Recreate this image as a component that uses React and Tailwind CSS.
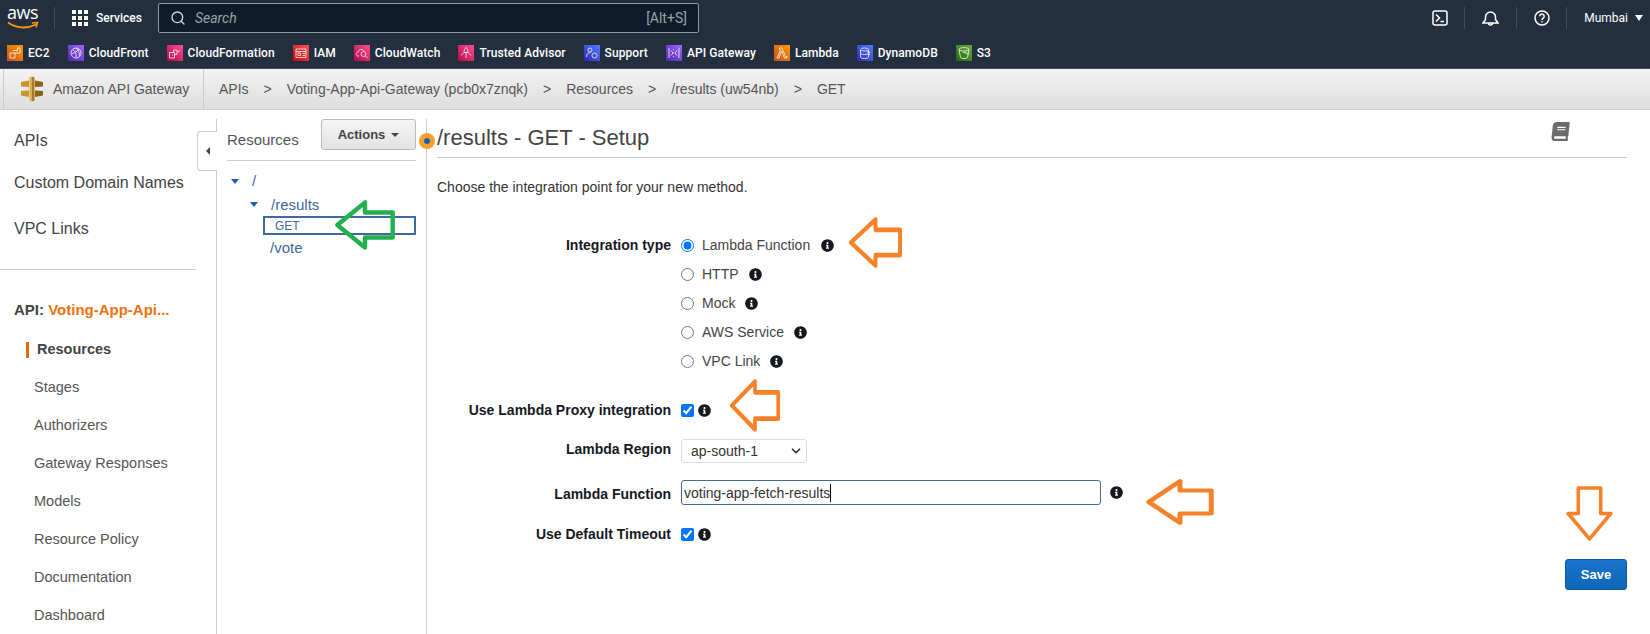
import React from "react";
import { FaInfoCircle, FaBook } from "react-icons/fa";
import { ChevronDown, Search } from "lucide-react";

const favorites = [
  { name: "EC2", from: "#c8511b", to: "#ff9900", glyph: "ec2" },
  { name: "CloudFront", from: "#4d27a8", to: "#a166ff", glyph: "front" },
  { name: "CloudFormation", from: "#b0084d", to: "#ff4f8b", glyph: "formation" },
  { name: "IAM", from: "#bd0816", to: "#ff5252", glyph: "iam" },
  { name: "CloudWatch", from: "#b0084d", to: "#ff4f8b", glyph: "watch" },
  { name: "Trusted Advisor", from: "#b0084d", to: "#ff4f8b", glyph: "advisor" },
  { name: "Support", from: "#2e27ad", to: "#527fff", glyph: "support" },
  { name: "API Gateway", from: "#4d27a8", to: "#a166ff", glyph: "gateway" },
  { name: "Lambda", from: "#c8511b", to: "#ff9900", glyph: "lambda" },
  { name: "DynamoDB", from: "#2e27ad", to: "#527fff", glyph: "dynamo" },
  { name: "S3", from: "#1b660f", to: "#6cae3e", glyph: "s3" },
];

const glyphs = {
  ec2: <path d="M3 8h5v5H3zM6 5.500h4.500V3H13v5h-2.500M8 8h3" />,
  front: (
    <>
      <circle cx="8" cy="8" r="5" />
      <path d="M5 5c2 1 4 4 3 8M11 4.500C9 6 7 8 3.500 9M8 3c2 2 4 5 3.500 8.500" />
    </>
  ),
  formation: <path d="M2.500 7.500h5V13h-5zM7.500 9.500H10V5H6.500v2.500M10 7l3-1.500M5 10h1" />,
  iam: <path d="M3 4h10v8.500H3zM3 6.500h10M5 8h2.500v2.500H5zM9.500 8.500H12M9.500 10.500H12" />,
  watch: (
    <>
      <path d="M5 11H3.500C1.500 10 2 7.500 4 7.300 4.500 4.500 8 3.500 9.500 5.500" />
      <circle cx="9.500" cy="9" r="2.500" />
      <path d="M11.500 11l2 2" />
    </>
  ),
  advisor: <path d="M8 2.500c1.500 1 2 3 2 5H6c0-2 .5-4 2-5zM3 10.500l3-3M13 10.500l-3-3M8 7.500V13M3 12h.1M13 12h.1M5.500 12.500h.1M10.500 12.500h.1" />,
  support: (
    <>
      <circle cx="6" cy="5" r="2" />
      <path d="M2.500 12c0-3 1.500-4.500 4-4.500" />
      <circle cx="10.500" cy="10.500" r="2.500" />
    </>
  ),
  gateway: <path d="M3 3v10M13 3v10M5 5.500L7 8l-2 2.500M11 5.500L9 8l2 2.500M7.500 4v1M7.500 7.500v1M7.500 11v1" />,
  lambda: <path d="M5.500 3H8l3.500 8.500H13V13h-2.500L7.500 6 5 13H3l3.500-7.500L6 4.500H5.500z" />,
  dynamo: (
    <>
      <ellipse cx="7.500" cy="4.500" rx="4" ry="1.500" />
      <path d="M3.500 4.500v7.500c0 2 8 2 8 0V4.500M3.500 8c0 2 8 2 8 0M10 7l3 0-2 2.500h2" />
    </>
  ),
  s3: <path d="M3 4.500c0-2.500 10-2.500 10 0l-1.500 8c-.5 1.500-6.500 1.500-7 0zM3 4.500c0 2 10 2 10 0M7 7l6 2" />,
};

const navItems = ["Stages", "Authorizers", "Gateway Responses", "Models", "Resource Policy", "Documentation", "Dashboard"];
const integrationTypes = ["Lambda Function", "HTTP", "Mock", "AWS Service", "VPC Link"];

function FavIcon({ item }) {
  return (
    <svg width="16" height="16" viewBox="0 0 16 16" className="shrink-0">
      <defs>
        <linearGradient id={`fav-${item.glyph}`} x1="0" y1="1" x2="1" y2="0">
          <stop offset="0" stopColor={item.from} />
          <stop offset="1" stopColor={item.to} />
        </linearGradient>
      </defs>
      <rect width="16" height="16" fill={`url(#fav-${item.glyph})`} />
      <g fill="none" stroke="#fff" strokeWidth="0.9" opacity="0.85">
        {glyphs[item.glyph]}
      </g>
    </svg>
  );
}

function AwsLogo() {
  return (
    <div className="relative w-[32px] h-[24px]">
      <span className="absolute left-0 top-[-5px] text-[18px] leading-[22px] text-white font-['Open_Sans',sans-serif] tracking-[-0.5px]">
        aws
      </span>
      <svg width="32" height="10" viewBox="0 0 32 10" className="absolute left-0 top-[15px]">
        <path d="M1 1.500C9 7.500 20 8 29 3.500" fill="none" stroke="#ff9900" strokeWidth="1.800" />
        <path d="M25 2l5.500-.5-1.500 5" fill="none" stroke="#ff9900" strokeWidth="1.500" />
      </svg>
    </div>
  );
}

function ApiGatewayLogo() {
  return (
    <svg width="24" height="26" viewBox="0 0 24 26" className="shrink-0">
      <path d="M1 6l8-1.500v6.500l-8-.5zM1 15l8-.5V21l-8-1.500z" fill="#c9952c" />
      <path d="M23 6l-8-1.500v6.500l8-.5zM23 15l-8-.5V21l8-1.500z" fill="#8c6219" />
      <path d="M9.500 1.500L12 .5v25l-2.500-1z" fill="#e0ae48" />
      <path d="M14.500 1.500L12 .5v25l2.500-1z" fill="#a87a23" />
    </svg>
  );
}

// hollow hand-drawn annotation arrows, they lie over the page
function ArrowLeft({ color, className }) {
  return (
    <svg viewBox="0 0 56 46" preserveAspectRatio="none" className={`absolute ${className}`}>
      <path d="M3 23L28 3V12H53V34H28V43Z" fill="none" stroke={color} strokeWidth="4" strokeLinejoin="round" />
    </svg>
  );
}

function ArrowDown({ className }) {
  return (
    <svg viewBox="0 0 46 54" className={`absolute ${className}`}>
      <path d="M12 2H34V27H44L23 52L2 27H12Z" fill="none" stroke="#f58229" strokeWidth="3.500" strokeLinejoin="round" />
    </svg>
  );
}

function Info({ className = "" }) {
  return <FaInfoCircle className={`text-[13px] text-[#16191f] shrink-0 ${className}`} />;
}

function Row({ label, className = "", labelClass = "", children }) {
  return (
    <div className={`flex items-center ${className}`}>
      <div className={`w-[244px] pr-[10px] text-right text-[14px] font-bold text-[#16191f] whitespace-nowrap ${labelClass}`}>
        {label}
      </div>
      <div className="flex items-center">{children}</div>
    </div>
  );
}

export default function App() {
  return (
    <div className="relative w-[1650px] h-[634px] overflow-hidden bg-white font-['Liberation_Sans',sans-serif] text-[#444]">
      {/* TOP BAR */}
      <header className="h-[69px] bg-[#232f3e] border-b border-[#414d5c] text-white">
        <div className="h-[36px] flex items-center">
          <div className="ml-[7px] w-[47px]">
            <AwsLogo />
          </div>
          <div className="w-px h-[22px] bg-[#414d5c]" />
          <div className="ml-[17px] grid grid-cols-3 gap-[2px]">
            {Array.from({ length: 9 }).map((_, i) => (
              <span key={i} className="w-[4px] h-[4px] bg-white" />
            ))}
          </div>
          <span className="ml-[8px] text-[12px] font-medium font-['Roboto',sans-serif]">Services</span>
          <div className="ml-[16px] w-[541px] h-[30px] flex items-center rounded-[2px] border border-[#8d99a8] bg-[#0f1b2a] px-[11px]">
            <Search size={16} className="text-[#d5dbdb]" strokeWidth={2} />
            <span className="ml-[9px] text-[14px] italic text-[#95a5a6] font-['Roboto',sans-serif]">Search</span>
            <span className="ml-auto text-[14px] text-[#95a5a6] font-['Roboto',sans-serif]">[Alt+S]</span>
          </div>

          <div className="ml-auto flex items-center">
            <svg width="16" height="16" viewBox="0 0 16 16" fill="none" stroke="#fff" strokeWidth="1.500">
              <rect x="1" y="1" width="14" height="14" rx="2" />
              <path d="M4 4.500L7.500 8 4 11.500M8.500 11.500H12" />
            </svg>
            <div className="ml-[16px] w-px h-[22px] bg-[#414d5c]" />
            <svg className="ml-[17px]" width="17" height="17" viewBox="0 0 17 17" fill="none" stroke="#fff" strokeWidth="1.500">
              <path d="M1 13h15l-2.500-3.500V7A5 5 0 0 0 3.500 7v2.500zM6.500 13a2 2 0 0 0 4 0" />
            </svg>
            <div className="ml-[17px] w-px h-[22px] bg-[#414d5c]" />
            <svg className="ml-[17px]" width="16" height="16" viewBox="0 0 16 16" fill="none" stroke="#fff" strokeWidth="1.500">
              <circle cx="8" cy="8" r="7" />
              <path d="M5.800 6.300a2.200 2.200 0 1 1 3.400 1.800C8.400 8.700 8 9 8 10M8 11.300v1.300" />
            </svg>
            <div className="ml-[16px] w-px h-[22px] bg-[#414d5c]" />
            <span className="ml-[17px] text-[12px] font-['Roboto',sans-serif]">Mumbai</span>
            <span className="ml-[7px] mr-[7px] w-0 h-0 border-x-[4px] border-x-transparent border-t-[6px] border-t-white" />
          </div>
        </div>
        <div className="h-[32px] flex items-center gap-[18px] pl-[7px] pt-[2px]">
          {favorites.map((item) => (
            <div key={item.name} className="flex items-center gap-[5px]">
              <FavIcon item={item} />
              <span className="text-[12px] font-medium font-['Roboto',sans-serif] tracking-[0.07px] whitespace-nowrap">{item.name}</span>
            </div>
          ))}
        </div>
      </header>

      {/* BREADCRUMB */}
      <div className="h-[41px] flex items-stretch bg-gradient-to-b from-[#f2f2f2] to-[#dedede] border-b border-[#ccc] pl-[3px] text-[14px] text-[#555]">
        <div className="w-[201px] flex items-center border-x border-[#ccc] pl-[16px]">
          <ApiGatewayLogo />
          <span className="ml-[9px]">Amazon API Gateway</span>
        </div>
        <div className="flex items-center gap-[15px] pl-[15px]">
          <span>APIs</span>
          <span>&gt;</span>
          <span>Voting-App-Api-Gateway (pcb0x7znqk)</span>
          <span>&gt;</span>
          <span>Resources</span>
          <span>&gt;</span>
          <span>/results (uw54nb)</span>
          <span>&gt;</span>
          <span>GET</span>
        </div>
      </div>

      <div className="flex h-[524px]">
        {/* LEFT NAV */}
        <aside className="w-[216px] shrink-0">
          <div className="pt-[10px] pl-[14px] pr-[18px] text-[16px] text-[#444]">
            <div className="h-[41px] flex items-center">APIs</div>
            <div className="h-[44px] flex items-center whitespace-nowrap">Custom Domain Names</div>
            <div className="h-[47px] flex items-center">VPC Links</div>
          </div>
          <div className="mt-[17px] w-[196px] border-t border-[#ccc]" />
          <div className="mt-[29px] pl-[14px] h-[20px] text-[15px] font-bold whitespace-nowrap">
            API: <span className="text-[#ec7211]">Voting-App-Api...</span>
          </div>
          <div className="mt-[12px] ml-[26px] h-[38px] flex items-center text-[14.5px] font-bold">
            <span className="w-[3px] h-[16px] bg-[#dd6b10]" />
            <span className="ml-[8px]">Resources</span>
          </div>
          {navItems.map((item) => (
            <div key={item} className="h-[38px] pl-[34px] flex items-center text-[14.5px] text-[#555]">
              {item}
            </div>
          ))}
        </aside>

        {/* RESOURCES TREE */}
        <section className="w-[211px] shrink-0 mt-[9px] border-x border-[#ccc] pl-[10px] pr-[10px] relative">
          <div className="absolute left-[-20px] top-[12px] w-[20px] h-[40px] flex items-center justify-center rounded-l-[4px] border border-r-0 border-[#ccc] bg-white">
            <span className="w-0 h-0 border-y-[4px] border-y-transparent border-r-[4px] border-r-[#444]" />
          </div>
          <div className="h-[42px] flex items-start justify-between border-b border-[#ccc]">
            <span className="mt-[11px] text-[15px] leading-[20px] text-[#555]">Resources</span>
            <button className="w-[95px] h-[31px] flex items-center justify-center gap-[6px] rounded-[3px] border border-[#bbb] bg-gradient-to-b from-[#f5f5f5] to-[#e3e3e3] text-[13px] font-bold text-[#444]">
              Actions
              <span className="w-0 h-0 border-x-[4px] border-x-transparent border-t-[4px] border-t-[#444]" />
            </button>
          </div>
          <div className="text-[15px] text-[#41699e]">
            <div className="mt-[8px] h-[24px] flex items-center pl-[4px]">
              <span className="w-0 h-0 border-x-[4px] border-x-transparent border-t-[5px] border-t-[#1f5fae]" />
              <span className="ml-[13px]">/</span>
            </div>
            <div className="h-[23px] flex items-center pl-[23px]">
              <span className="w-0 h-0 border-x-[4px] border-x-transparent border-t-[5px] border-t-[#1f5fae]" />
              <span className="ml-[13px] mt-[2px]">/results</span>
            </div>
            <div className="ml-[36px] h-[19px] flex items-center border-2 border-[#41699e] pl-[10px] text-[12px]">GET</div>
            <div className="h-[27px] flex items-center pl-[43px]">/vote</div>
          </div>
        </section>

        {/* METHOD SETUP */}
        <main className="relative flex-1 pl-[10px] pr-[23px]">
          <span className="absolute left-[-8px] top-[23px] w-[16px] h-[16px] flex items-center justify-center rounded-full bg-[#f7a02f]">
            <span className="w-[6px] h-[6px] rounded-full bg-[#1f5fae]" />
          </span>
          <div className="h-[48px] flex items-start justify-between border-b border-[#ccc]">
            <h1 className="mt-[14px] text-[22px] leading-[28px] text-[#444] whitespace-nowrap">/results - GET - Setup</h1>
            <FaBook className="mt-[12px] mr-[57px] text-[19px] text-[#6b6b6b] -skew-x-6" />
          </div>
          <p className="mt-[19px] h-[20px] text-[14px] leading-[20px] text-[#333]">Choose the integration point for your new method.</p>

          <div className="mt-[34px]">
            {integrationTypes.map((type, i) => (
              <Row key={type} label={i === 0 ? "Integration type" : ""} className="h-[29px]">
                <input type="radio" name="integration" defaultChecked={i === 0} className="w-[13px] h-[13px] m-0" />
                <span className="ml-[8px] text-[14px] text-[#444]">{type}</span>
                <Info className={i === 0 ? "ml-[11px]" : "ml-[10px]"} />
              </Row>
            ))}
            <Row label="Use Lambda Proxy integration" className="mt-[20px] h-[28px]">
              <input type="checkbox" defaultChecked className="w-[13px] h-[13px] m-0" />
              <Info className="ml-[4px]" />
            </Row>
            <Row label="Lambda Region" labelClass="-mt-[4px]" className="mt-[15px] h-[24px]">
              <div className="w-[126px] h-[24px] flex items-center justify-between rounded-[3px] border border-[#ddd] pl-[9px] pr-[3px] text-[14px] text-[#333]">
                ap-south-1
                <ChevronDown size={14} strokeWidth={3} className="text-[#333]" />
              </div>
            </Row>
            <Row label="Lambda Function" labelClass="mt-[4px]" className="mt-[17px] h-[25px]">
              <div className="w-[420px] h-[25px] flex items-center rounded-[3px] border border-[#41699e] pl-[2px] text-[14px] text-[#333]">
                <span className="border-r border-black leading-[18px]">voting-app-fetch-results</span>
              </div>
              <Info className="ml-[9px]" />
            </Row>
            <Row label="Use Default Timeout" className="mt-[17px] h-[24px]">
              <input type="checkbox" defaultChecked className="w-[13px] h-[13px] m-0" />
              <Info className="ml-[4px]" />
            </Row>
          </div>

          <div className="flex justify-end mt-[13px]">
            <button className="w-[62px] h-[31px] rounded-[3px] border border-[#0f5a9e] bg-gradient-to-b from-[#1874cd] to-[#0f66b8] text-[13px] font-bold text-white">
              Save
            </button>
          </div>
        </main>
      </div>

      {/* ANNOTATION ARROWS */}
      <ArrowLeft color="#22b14c" className="left-[334px] top-[199px] w-[62px] h-[52px]" />
      <ArrowLeft color="#f58229" className="left-[848px] top-[216px] w-[55px] h-[53px]" />
      <ArrowLeft color="#f58229" className="left-[729px] top-[378px] w-[52px] h-[55px]" />
      <ArrowLeft color="#f58229" className="left-[1145px] top-[478px] w-[70px] h-[48px]" />
      <ArrowDown className="left-[1566px] top-[486px] w-[47px] h-[55px]" />
    </div>
  );
}
